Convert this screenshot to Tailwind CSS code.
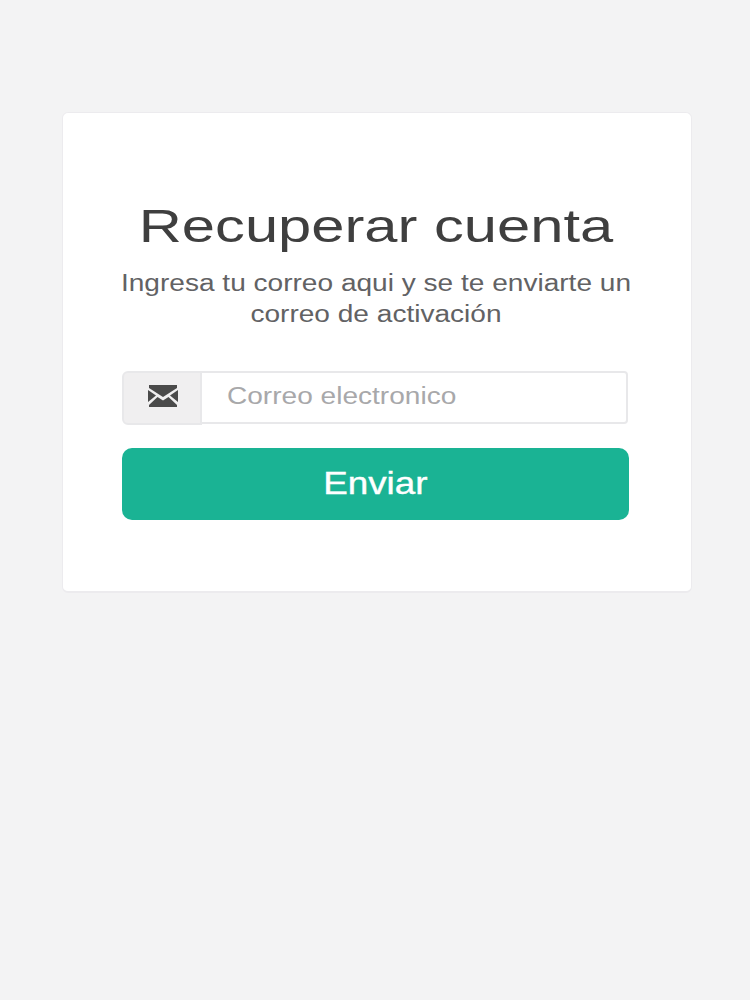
<!DOCTYPE html>
<html lang="es">
<head>
  <meta charset="UTF-8" />
  <title>Recuperar cuenta</title>
  <script src="https://cdn.jsdelivr.net/npm/@tailwindcss/browser@4"></script>
</head>
<body class="min-h-screen bg-[#f3f3f4] font-['Liberation_Sans',Arial,sans-serif]">
  <div class="pt-[112px] pl-[62px]">
    <div class="w-[630px] h-[481px] bg-white rounded-[6px] border border-[#ecebee] border-b-2 pt-[84px] pl-[59px] pr-[61px]">
      <!-- the reference text is wider than the font, hence the scale-x -->
      <h1 class="text-[47px] leading-[58px] text-[#3f3f3f] text-center scale-x-[1.27]">Recuperar cuenta</h1>
      <p class="mt-[13px] text-[23px] leading-[31px] text-[#626264] text-center scale-x-[1.22]">Ingresa tu correo aqui y se te enviarte un<br />correo de activación</p>

      <div class="mt-[41px] flex h-[54px] w-[506px]">
        <span class="w-[80px] h-[54px] flex items-center justify-center bg-[#f0eff0] border-2 border-[#e8e8ea] rounded-l-[6px]">
          <svg width="30" height="22" viewBox="0 0 30 22" class="ml-[2px] mb-[4px]">
            <path fill="#4a4a4a" d="M1 0h28v3L15 12 1 3z" />
            <path fill="#4a4a4a" d="M0 5l8 5.500-8 6.500zM30 5l-8 5.500 8 6.500z" />
            <path fill="#4a4a4a" d="M9.500 12L15 15.500l5.500-3.500L29 20v2H1v-2z" />
          </svg>
        </span>
        <div class="flex-1 h-[53px] border-2 border-l-0 border-[#e8e8ea] rounded-r-[4px] bg-white pl-[25px] pb-[2px] overflow-hidden">
          <input class="w-[320px] h-full origin-left scale-x-[1.22] text-[23px] text-[#424242] placeholder:text-[#a8a8aa] outline-none" placeholder="Correo electronico" />
        </div>
      </div>

      <button class="mt-[23px] w-[507px] h-[72px] rounded-[10px] bg-[#1ab394] text-white text-[32px] pb-[3px] [-webkit-text-stroke:0.4px_white]"><span class="inline-block scale-x-[1.15]">Enviar</span></button>
    </div>
  </div>
</body>
</html>
